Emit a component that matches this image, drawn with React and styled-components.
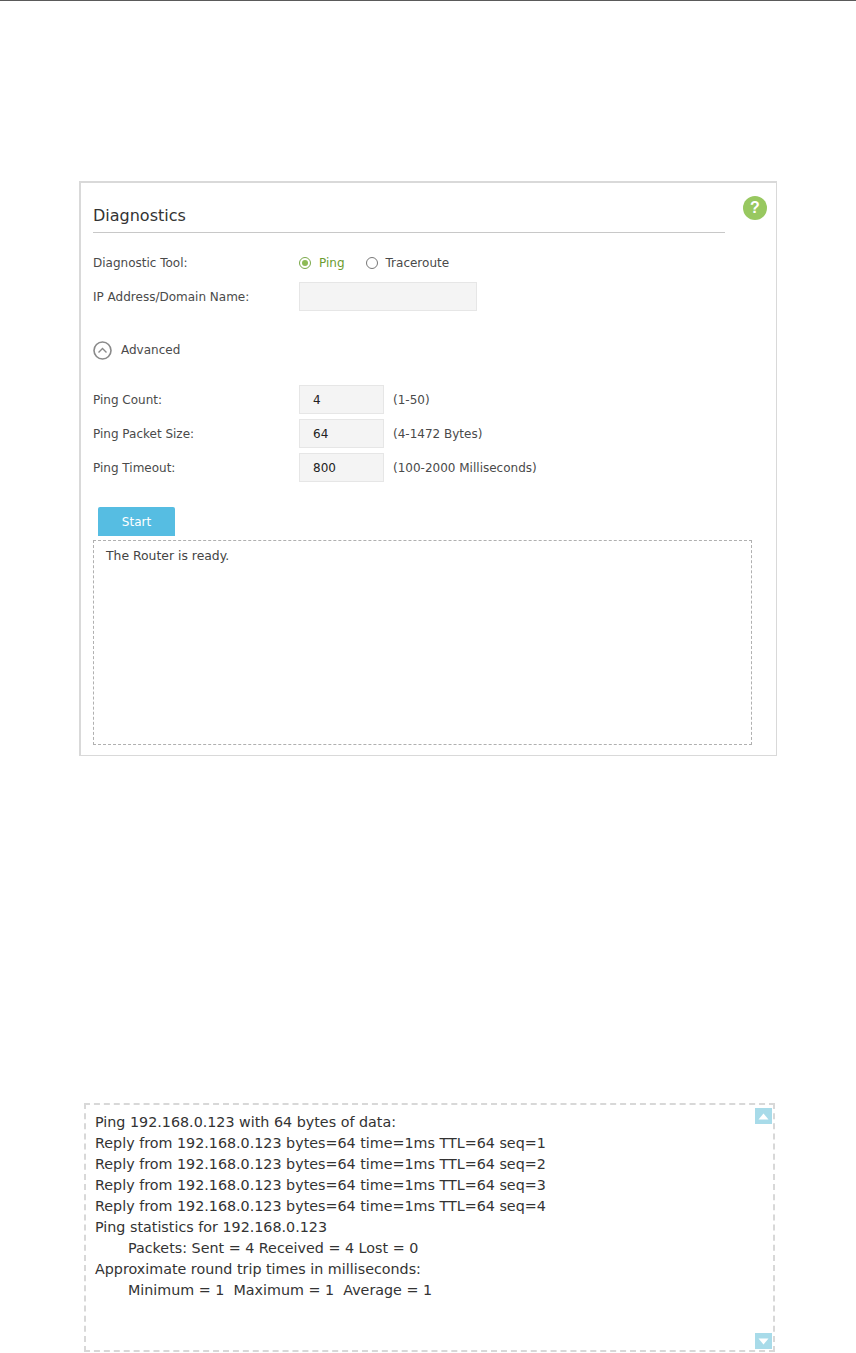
import React from "react";
import styled, { createGlobalStyle } from "styled-components";

const GlobalStyle = createGlobalStyle`
  html, body {
    margin: 0;
    padding: 0;
    background: #fff;
  }
  body {
    font-family: "DejaVu Sans", Verdana, sans-serif;
  }
`;

const Page = styled.div`
  width: 856px;
  height: 1353px;
  overflow: hidden;
  border-top: 1px solid #5a5a5a;
  box-sizing: border-box;
  padding-top: 180px;
`;

const Panel = styled.section`
  position: relative;
  box-sizing: border-box;
  width: 698px;
  height: 575px;
  margin-left: 79px;
  padding: 0 12px;
  border: 2px solid #d9d9d9;
  border-right-width: 1px;
  border-bottom-width: 1px;
`;

const Title = styled.h2`
  box-sizing: border-box;
  width: 632px;
  height: 50px;
  margin: 0 0 16px;
  padding-top: 23px;
  border-bottom: 1px solid #c8c8c8;
  font-size: 16px;
  line-height: 20px;
  font-weight: 400;
  color: #333;
`;

const Help = styled.div`
  position: absolute;
  top: 13px;
  right: 9px;
  width: 24px;
  height: 24px;
  border-radius: 50%;
  background: #98c860;
  color: #fff;
  font: 700 16px/24px "Liberation Sans", sans-serif;
  text-align: center;
`;

const Row = styled.div`
  display: flex;
  align-items: center;
  height: ${(p) => p.$h || 29}px;
  margin-bottom: ${(p) => p.$mb || 0}px;
`;

const Label = styled.div`
  width: 206px;
  font-size: 12px;
  color: #4a4a4a;
`;

const RadioGroup = styled.label`
  display: flex;
  align-items: center;
  margin-right: 21px;
  font-size: 12px;
  color: ${(p) => (p.$on ? "#6b9c30" : "#4a4a4a")};
`;

const RadioDot = styled.span`
  box-sizing: border-box;
  width: 12px;
  height: 12px;
  margin-right: 8px;
  border-radius: 50%;
  border: 1px solid ${(p) => (p.$on ? "#7aa848" : "#777")};
  padding: 2px;
  &::after {
    content: "";
    display: ${(p) => (p.$on ? "block" : "none")};
    width: 6px;
    height: 6px;
    border-radius: 50%;
    background: #8dbb55;
  }
`;

const Field = styled.div`
  box-sizing: border-box;
  width: ${(p) => p.$w}px;
  height: 29px;
  padding-left: 13px;
  background: #f4f4f4;
  border: 1px solid #e6e6e6;
  font-size: 12px;
  line-height: 28px;
  color: #222;
`;

const Hint = styled.span`
  margin-left: 9px;
  font-size: 12px;
  color: #4a4a4a;
`;

const AdvancedRow = styled.div`
  display: flex;
  align-items: center;
  height: 20px;
  margin: 29px 0 25px;
  font-size: 12px;
  color: #4a4a4a;
  svg {
    margin-right: 9px;
  }
`;

const StartButton = styled.button`
  display: block;
  width: 77px;
  height: 29px;
  margin: 25px 0 4px 5px;
  padding: 0;
  border: none;
  border-radius: 2px 2px 0 0;
  background: #56bde2;
  color: #fff;
  font-family: inherit;
  font-size: 12px;
`;

const LogBox = styled.div`
  box-sizing: border-box;
  width: 659px;
  height: 205px;
  padding: 7px 12px;
  border: 1px dashed #b0b0b0;
  font-size: 12.4px;
  line-height: 16px;
  color: #444;
`;

const Output = styled.div`
  position: relative;
  box-sizing: border-box;
  width: 691px;
  height: 249px;
  margin: 347px 0 0 84px;
  padding: 7px 9px;
  border: 2px dashed #d8d8d8;
  font-size: 14.3px;
  line-height: 21px;
  color: #333;
`;

const OutLine = styled.div`
  padding-left: ${(p) => (p.$indent ? 33 : 0)}px;
  white-space: pre;
`;

const ScrollBtn = styled.div`
  position: absolute;
  right: 1px;
  width: 17px;
  height: 16px;
  background: #a8dbe9;
  display: flex;
  align-items: center;
  justify-content: center;
  ${(p) => (p.$up ? "top: 3px;" : "bottom: 1px;")}
`;

const outLines = [
  ["Ping 192.168.0.123 with 64 bytes of data:"],
  ["Reply from 192.168.0.123 bytes=64 time=1ms TTL=64 seq=1"],
  ["Reply from 192.168.0.123 bytes=64 time=1ms TTL=64 seq=2"],
  ["Reply from 192.168.0.123 bytes=64 time=1ms TTL=64 seq=3"],
  ["Reply from 192.168.0.123 bytes=64 time=1ms TTL=64 seq=4"],
  ["Ping statistics for 192.168.0.123"],
  ["Packets: Sent = 4 Received = 4 Lost = 0", true],
  ["Approximate round trip times in milliseconds:"],
  ["Minimum = 1  Maximum = 1  Average = 1", true],
];

function Arrow({ up }) {
  return (
    <svg width="11" height="7" viewBox="0 0 11 7">
      <path d={up ? "M5.5 0.5 L10.5 6.5 H0.5 Z" : "M0.5 0.5 H10.5 L5.5 6.5 Z"} fill="#fff" />
    </svg>
  );
}

export default function App() {
  return (
    <Page>
      <GlobalStyle />
      <Panel>
        <Title>Diagnostics</Title>
        <Help>?</Help>
        <Row $h={28} $mb={5}>
          <Label>Diagnostic Tool:</Label>
          <RadioGroup $on>
            <RadioDot $on />
            Ping
          </RadioGroup>
          <RadioGroup>
            <RadioDot />
            Traceroute
          </RadioGroup>
        </Row>
        <Row>
          <Label>IP Address/Domain Name:</Label>
          <Field $w={178} />
        </Row>
        <AdvancedRow>
          <svg width="19" height="19" viewBox="0 0 19 19" fill="none" stroke="#8a8a8a">
            <circle cx="9.5" cy="9.5" r="8.5" strokeWidth="1.6" />
            <path d="M5.5 11.5 L9.5 7.5 L13.5 11.5" strokeWidth="1.4" />
          </svg>
          Advanced
        </AdvancedRow>
        <Row $mb={5}>
          <Label>Ping Count:</Label>
          <Field $w={85}>4</Field>
          <Hint>(1-50)</Hint>
        </Row>
        <Row $mb={5}>
          <Label>Ping Packet Size:</Label>
          <Field $w={85}>64</Field>
          <Hint>(4-1472 Bytes)</Hint>
        </Row>
        <Row>
          <Label>Ping Timeout:</Label>
          <Field $w={85}>800</Field>
          <Hint>(100-2000 Milliseconds)</Hint>
        </Row>
        <StartButton>Start</StartButton>
        <LogBox>The Router is ready.</LogBox>
      </Panel>
      <Output>
        {outLines.map(([text, indent], i) => (
          <OutLine key={i} $indent={indent}>
            {text}
          </OutLine>
        ))}
        <ScrollBtn $up>
          <Arrow up />
        </ScrollBtn>
        <ScrollBtn>
          <Arrow />
        </ScrollBtn>
      </Output>
    </Page>
  );
}
